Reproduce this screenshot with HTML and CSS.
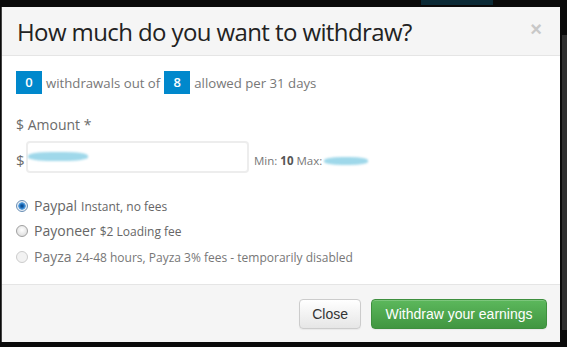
FILE: index.html
```html
<!DOCTYPE html>
<html lang="en">
<head>
    <meta charset="UTF-8">
    <title>Withdraw</title>
    <link rel="stylesheet" href="styles.css">
</head>
<body>
<div class="backdrop">
    <div class="page-strip"></div>
    <div class="page-side"></div>
    <div class="modal">
        <div class="modal-header">
            <h3>How much do you want to withdraw?</h3>
            <span class="close-x">&times;</span>
        </div>

        <div class="modal-body">
            <p class="limits">
                <span class="badge">0</span> withdrawals out of <span class="badge">8</span> allowed per 31 days
            </p>

            <label class="amount-label">$ Amount *</label>
            <div class="amount-row">
                <span class="dollar">$</span>
                <div class="amount-input"><span class="blur blur-wide"></span></div>
                <span class="minmax">Min: <b>10</b> Max:<span class="blur blur-small"></span></span>
            </div>

            <ul class="methods">
                <li><span class="radio checked"></span>Paypal <small>Instant, no fees</small></li>
                <li><span class="radio"></span>Payoneer <small>$2 Loading fee</small></li>
                <li class="disabled"><span class="radio"></span>Payza <small>24-48 hours, Payza 3% fees - temporarily disabled</small></li>
            </ul>
        </div>

        <div class="modal-footer">
            <button class="btn">Close</button>
            <button class="btn btn-success">Withdraw your earnings</button>
        </div>
    </div>
</div>
</body>
</html>
```

FILE: styles.css
```css
body {
    margin: 0;
    background: #0a0a0a;
    font-family: "Open Sans", sans-serif;
}

.backdrop {
    position: relative;
    height: 347px;
    padding: 7px 0 0 1px;
    box-sizing: border-box;
    overflow: hidden;
}

/* bits of the page showing behind the modal */
.page-strip {
    position: absolute;
    top: 0;
    left: 421px;
    width: 72px;
    height: 5px;
    background: #0b2a36;
}

.page-side {
    position: absolute;
    top: 35px;
    left: 562px;
    width: 5px;
    height: 295px;
    background: #2e2e2e;
}

.modal {
    width: 559px;
    height: 335px;
    background: #fff;
    border-left: 1px solid #444;
    box-sizing: border-box;
    display: flex;
    flex-direction: column;
}

.modal-header {
    position: relative;
    height: 49px;
    background: #f5f5f5;
    border-bottom: 1px solid #e5e5e5;
    padding: 0 0 0 15px;
    box-sizing: border-box;
}

.modal-header h3 {
    margin: 0;
    font-weight: 400;
    font-size: 24px;
    letter-spacing: -0.6px;
    line-height: 49px;
    color: #222;
}

.close-x {
    position: absolute;
    right: 18px;
    top: 11px;
    font-family: "Liberation Sans", sans-serif;
    font-weight: bold;
    font-size: 20px;
    color: #c8c8c8;
}

.modal-body {
    flex: 1;
    padding: 15px 14px 0 14px;
}

.limits {
    margin: 0;
    font-size: 13.2px;
    color: #777;
    display: flex;
    align-items: center;
    height: 23px;
}

.badge {
    display: inline-block;
    width: 26px;
    height: 23px;
    line-height: 23px;
    text-align: center;
    background: #0088cc;
    color: #fff;
    font-weight: 600;
    font-size: 13px;
    margin-right: 4px;
}

.limits .badge:nth-child(2) {
    margin-left: 4px;
}

.amount-label {
    display: block;
    margin-top: 21px;
    font-size: 14px;
    color: #6b6b6b;
}

.amount-row {
    display: flex;
    align-items: center;
    margin-top: 7px;
    color: #6b6b6b;
}

.dollar {
    font-size: 15px;
    width: 10px;
    margin-top: 6px;
}

.amount-input {
    position: relative;
    width: 223px;
    height: 32px;
    border: 2px solid #ededed;
    border-radius: 4px;
    box-sizing: border-box;
}

.blur {
    position: absolute;
    background: #9fd8ea;
    border-radius: 40%;
    filter: blur(1px);
}

.blur-wide {
    left: 0;
    top: 9px;
    width: 60px;
    height: 9px;
}

.minmax {
    position: relative;
    margin-left: 5px;
    margin-top: 6px;
    font-size: 11.5px;
    color: #777;
}

.minmax b {
    color: #555;
}

.blur-small {
    left: 70px;
    top: 4px;
    width: 44px;
    height: 8px;
}

.methods {
    list-style: none;
    margin: 23px 0 0;
    padding: 0;
}

.methods li {
    display: flex;
    align-items: baseline;
    font-size: 14px;
    color: #666;
    height: 25px;
    margin-bottom: 0;
}

.methods li + li {
    margin-top: 0;
}

.methods li:last-child {
    margin-top: 1px;
}

.methods small {
    font-size: 12px;
    margin-left: 4px;
}

.methods .disabled {
    color: #777;
}

.radio {
    display: inline-block;
    width: 10px;
    height: 10px;
    border-radius: 50%;
    border: 1px solid #a0a0a0;
    background: radial-gradient(circle at 50% 40%, #fff, #d6d6d6);
    margin-right: 6px;
    position: relative;
    top: 1px;
}

.radio.checked {
    background: radial-gradient(circle, #0a3d7a 0, #1a6fc0 2px, #6aa8df 3.5px, #e8eef5 4px);
    border-color: #6a8fb5;
}

.disabled .radio {
    border-color: #ccc;
    background: #f2f2f2;
}

.modal-footer {
    height: 58px;
    background: #f5f5f5;
    border-top: 1px solid #e5e5e5;
    box-sizing: border-box;
    display: flex;
    justify-content: flex-end;
    align-items: center;
    gap: 10px;
    padding: 0 13px 0 0;
}

.btn {
    font-family: "Liberation Sans", sans-serif;
    font-size: 14px;
    height: 30px;
    padding: 0 12px;
    border-radius: 4px;
    border: 1px solid #ccc;
    background: linear-gradient(#fff, #e6e6e6);
    color: #333;
    box-shadow: inset 0 1px 0 rgba(255, 255, 255, 0.2), 0 1px 1px rgba(0, 0, 0, 0.05);
}

.btn-success {
    width: 176px;
    border-color: #3e8f3e;
    background: linear-gradient(#5cb85c, #419641);
    color: #fff;
    padding: 0;
}
```
